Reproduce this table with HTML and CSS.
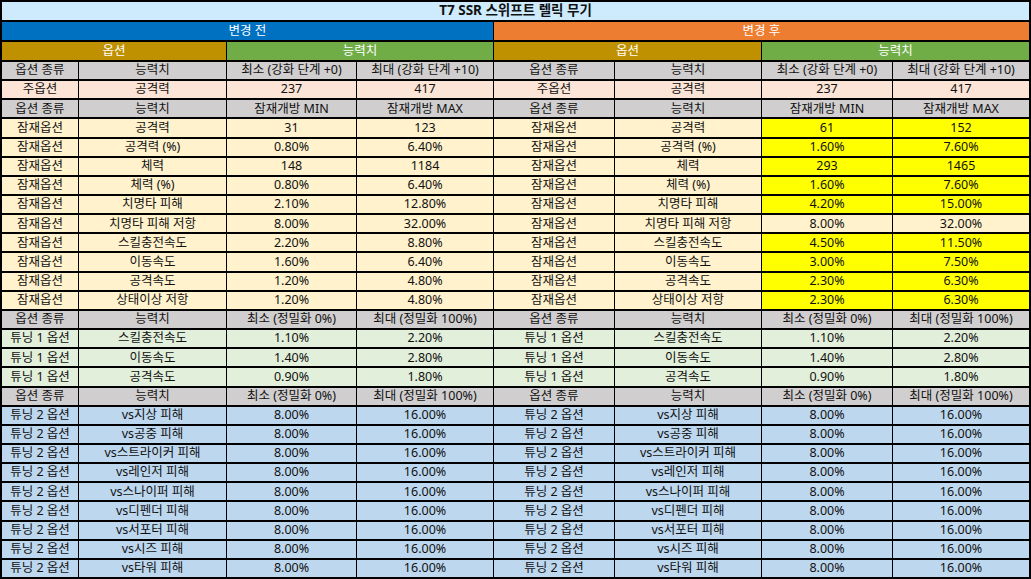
FILE: index.html
```html
<!DOCTYPE html>
<html lang="ko">
<head>
<meta charset="utf-8">
<title>T7 SSR 스위프트 렐릭 무기</title>
<link rel="stylesheet" href="styles.css">
</head>
<body>
<div class="sheet">
  <div class="c title span8">T7 SSR 스위프트 렐릭 무기</div>

  <div class="c before span4">변경 전</div>
  <div class="c after span4">변경 후</div>

  <div class="c opt span2">옵션</div>
  <div class="c stat span2">능력치</div>
  <div class="c opt span2">옵션</div>
  <div class="c stat span2">능력치</div>

  <div class="c hd">옵션 종류</div><div class="c hd">능력치</div><div class="c hd">최소 (강화 단계 +0)</div><div class="c hd">최대 (강화 단계 +10)</div>
  <div class="c hd">옵션 종류</div><div class="c hd">능력치</div><div class="c hd">최소 (강화 단계 +0)</div><div class="c hd">최대 (강화 단계 +10)</div>

  <div class="c main">주옵션</div><div class="c main">공격력</div><div class="c main">237</div><div class="c main">417</div>
  <div class="c main">주옵션</div><div class="c main">공격력</div><div class="c main">237</div><div class="c main">417</div>

  <div class="c hd">옵션 종류</div><div class="c hd">능력치</div><div class="c hd">잠재개방 MIN</div><div class="c hd">잠재개방 MAX</div>
  <div class="c hd">옵션 종류</div><div class="c hd">능력치</div><div class="c hd">잠재개방 MIN</div><div class="c hd">잠재개방 MAX</div>

  <div class="c pot">잠재옵션</div><div class="c pot">공격력</div><div class="c pot">31</div><div class="c pot">123</div>
  <div class="c pot">잠재옵션</div><div class="c pot">공격력</div><div class="c yel">61</div><div class="c yel">152</div>

  <div class="c pot">잠재옵션</div><div class="c pot">공격력 (%)</div><div class="c pot">0.80%</div><div class="c pot">6.40%</div>
  <div class="c pot">잠재옵션</div><div class="c pot">공격력 (%)</div><div class="c yel">1.60%</div><div class="c yel">7.60%</div>

  <div class="c pot">잠재옵션</div><div class="c pot">체력</div><div class="c pot">148</div><div class="c pot">1184</div>
  <div class="c pot">잠재옵션</div><div class="c pot">체력</div><div class="c yel">293</div><div class="c yel">1465</div>

  <div class="c pot">잠재옵션</div><div class="c pot">체력 (%)</div><div class="c pot">0.80%</div><div class="c pot">6.40%</div>
  <div class="c pot">잠재옵션</div><div class="c pot">체력 (%)</div><div class="c yel">1.60%</div><div class="c yel">7.60%</div>

  <div class="c pot">잠재옵션</div><div class="c pot">치명타 피해</div><div class="c pot">2.10%</div><div class="c pot">12.80%</div>
  <div class="c pot">잠재옵션</div><div class="c pot">치명타 피해</div><div class="c yel">4.20%</div><div class="c yel">15.00%</div>

  <div class="c pot">잠재옵션</div><div class="c pot">치명타 피해 저항</div><div class="c pot">8.00%</div><div class="c pot">32.00%</div>
  <div class="c pot">잠재옵션</div><div class="c pot">치명타 피해 저항</div><div class="c pot">8.00%</div><div class="c pot">32.00%</div>

  <div class="c pot">잠재옵션</div><div class="c pot">스킬충전속도</div><div class="c pot">2.20%</div><div class="c pot">8.80%</div>
  <div class="c pot">잠재옵션</div><div class="c pot">스킬충전속도</div><div class="c yel">4.50%</div><div class="c yel">11.50%</div>

  <div class="c pot">잠재옵션</div><div class="c pot">이동속도</div><div class="c pot">1.60%</div><div class="c pot">6.40%</div>
  <div class="c pot">잠재옵션</div><div class="c pot">이동속도</div><div class="c yel">3.00%</div><div class="c yel">7.50%</div>

  <div class="c pot">잠재옵션</div><div class="c pot">공격속도</div><div class="c pot">1.20%</div><div class="c pot">4.80%</div>
  <div class="c pot">잠재옵션</div><div class="c pot">공격속도</div><div class="c yel">2.30%</div><div class="c yel">6.30%</div>

  <div class="c pot">잠재옵션</div><div class="c pot">상태이상 저항</div><div class="c pot">1.20%</div><div class="c pot">4.80%</div>
  <div class="c pot">잠재옵션</div><div class="c pot">상태이상 저항</div><div class="c yel">2.30%</div><div class="c yel">6.30%</div>

  <div class="c hd">옵션 종류</div><div class="c hd">능력치</div><div class="c hd">최소 (정밀화 0%)</div><div class="c hd">최대 (정밀화 100%)</div>
  <div class="c hd">옵션 종류</div><div class="c hd">능력치</div><div class="c hd">최소 (정밀화 0%)</div><div class="c hd">최대 (정밀화 100%)</div>

  <div class="c t1">튜닝 1 옵션</div><div class="c t1">스킬충전속도</div><div class="c t1">1.10%</div><div class="c t1">2.20%</div>
  <div class="c t1">튜닝 1 옵션</div><div class="c t1">스킬충전속도</div><div class="c t1">1.10%</div><div class="c t1">2.20%</div>

  <div class="c t1">튜닝 1 옵션</div><div class="c t1">이동속도</div><div class="c t1">1.40%</div><div class="c t1">2.80%</div>
  <div class="c t1">튜닝 1 옵션</div><div class="c t1">이동속도</div><div class="c t1">1.40%</div><div class="c t1">2.80%</div>

  <div class="c t1">튜닝 1 옵션</div><div class="c t1">공격속도</div><div class="c t1">0.90%</div><div class="c t1">1.80%</div>
  <div class="c t1">튜닝 1 옵션</div><div class="c t1">공격속도</div><div class="c t1">0.90%</div><div class="c t1">1.80%</div>

  <div class="c hd">옵션 종류</div><div class="c hd">능력치</div><div class="c hd">최소 (정밀화 0%)</div><div class="c hd">최대 (정밀화 100%)</div>
  <div class="c hd">옵션 종류</div><div class="c hd">능력치</div><div class="c hd">최소 (정밀화 0%)</div><div class="c hd">최대 (정밀화 100%)</div>

  <div class="c t2">튜닝 2 옵션</div><div class="c t2">vs지상 피해</div><div class="c t2">8.00%</div><div class="c t2">16.00%</div>
  <div class="c t2">튜닝 2 옵션</div><div class="c t2">vs지상 피해</div><div class="c t2">8.00%</div><div class="c t2">16.00%</div>

  <div class="c t2">튜닝 2 옵션</div><div class="c t2">vs공중 피해</div><div class="c t2">8.00%</div><div class="c t2">16.00%</div>
  <div class="c t2">튜닝 2 옵션</div><div class="c t2">vs공중 피해</div><div class="c t2">8.00%</div><div class="c t2">16.00%</div>

  <div class="c t2">튜닝 2 옵션</div><div class="c t2">vs스트라이커 피해</div><div class="c t2">8.00%</div><div class="c t2">16.00%</div>
  <div class="c t2">튜닝 2 옵션</div><div class="c t2">vs스트라이커 피해</div><div class="c t2">8.00%</div><div class="c t2">16.00%</div>

  <div class="c t2">튜닝 2 옵션</div><div class="c t2">vs레인저 피해</div><div class="c t2">8.00%</div><div class="c t2">16.00%</div>
  <div class="c t2">튜닝 2 옵션</div><div class="c t2">vs레인저 피해</div><div class="c t2">8.00%</div><div class="c t2">16.00%</div>

  <div class="c t2">튜닝 2 옵션</div><div class="c t2">vs스나이퍼 피해</div><div class="c t2">8.00%</div><div class="c t2">16.00%</div>
  <div class="c t2">튜닝 2 옵션</div><div class="c t2">vs스나이퍼 피해</div><div class="c t2">8.00%</div><div class="c t2">16.00%</div>

  <div class="c t2">튜닝 2 옵션</div><div class="c t2">vs디펜더 피해</div><div class="c t2">8.00%</div><div class="c t2">16.00%</div>
  <div class="c t2">튜닝 2 옵션</div><div class="c t2">vs디펜더 피해</div><div class="c t2">8.00%</div><div class="c t2">16.00%</div>

  <div class="c t2">튜닝 2 옵션</div><div class="c t2">vs서포터 피해</div><div class="c t2">8.00%</div><div class="c t2">16.00%</div>
  <div class="c t2">튜닝 2 옵션</div><div class="c t2">vs서포터 피해</div><div class="c t2">8.00%</div><div class="c t2">16.00%</div>

  <div class="c t2">튜닝 2 옵션</div><div class="c t2">vs시즈 피해</div><div class="c t2">8.00%</div><div class="c t2">16.00%</div>
  <div class="c t2">튜닝 2 옵션</div><div class="c t2">vs시즈 피해</div><div class="c t2">8.00%</div><div class="c t2">16.00%</div>

  <div class="c t2">튜닝 2 옵션</div><div class="c t2">vs타워 피해</div><div class="c t2">8.00%</div><div class="c t2">16.00%</div>
  <div class="c t2">튜닝 2 옵션</div><div class="c t2">vs타워 피해</div><div class="c t2">8.00%</div><div class="c t2">16.00%</div>
</div>
</body>
</html>
```

FILE: styles.css
```css
html, body {
  margin: 0;
  padding: 0;
  background: #ffffff;
}

.sheet {
  box-sizing: border-box;
  width: 1031px;
  height: 579px;
  padding: 2px;
  background: #000000;
  display: grid;
  grid-template-columns: 76px 147px 129px 136px 120px 146px 130px 136px;
  grid-template-rows: repeat(3, 18px) repeat(27, 1fr);
  column-gap: 1px;
  row-gap: 2px;
  font-family: "Noto Sans", "Noto Sans CJK KR", sans-serif;
  font-size: 12.5px;
  color: #111111;
}

.c {
  display: flex;
  align-items: center;
  justify-content: center;
  line-height: 1;
  white-space: nowrap;
  overflow: hidden;
}

.span8 { grid-column: span 8; }
.span4 { grid-column: span 4; }
.span2 { grid-column: span 2; }

.title {
  background: #cdebfd;
  font-weight: 700;
  font-size: 13.5px;
}

.before {
  background: #0070c0;
  color: #ffffff;
}

.after {
  background: #ed7d31;
  color: #ffffff;
}

.opt {
  background: #bf9000;
  color: #ffffff;
}

.stat {
  background: #70ad47;
  color: #ffffff;
}

.hd { background: #d0cece; }
.main { background: #fce4d6; }
.pot { background: #fff2cc; }
.yel { background: #ffff00; }
.t1 { background: #e2efda; }
.t2 { background: #bdd7ee; }
```
